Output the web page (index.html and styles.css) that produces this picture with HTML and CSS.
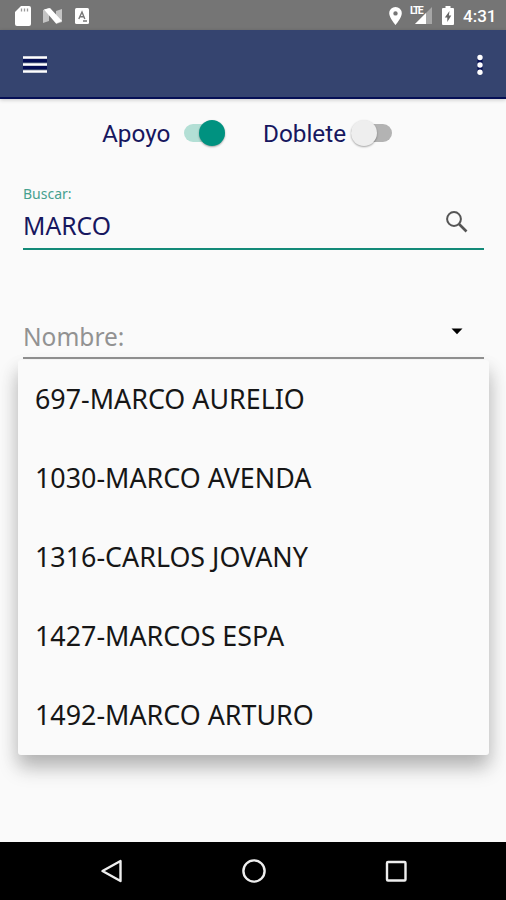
FILE: index.html
```html
<!DOCTYPE html>
<html lang="es">
<head>
<meta charset="utf-8">
<title>Apoyo</title>
<link rel="stylesheet" href="styles.css">
</head>
<body>
<div class="status">
  <svg class="sd" width="16" height="20" viewBox="0 0 16 20"><path fill="#fff" d="M6 0h8q2 0 2 2v16q0 2-2 2H2q-2 0-2-2V6z"/><path d="M6.500 2.500v3M9.500 2.500v3M12.500 2.500v3" stroke="#999" stroke-width="1.300"/></svg>
  <svg class="nougat" width="20" height="16" viewBox="0 0 20 16"><path fill="#c4c4c4" d="M0 2l6-2v13l-6 2zM13 3l6-2v13l-6 2z"/><path fill="#fff" d="M1 1.500L7 0l12 13-6 2.500z"/></svg>
  <svg class="abox" width="14" height="16" viewBox="0 0 14 16"><rect width="14" height="16" rx="1.500" fill="#fff"/><path d="M3.800 11L7 4l2.800 7M5 8.800h4M8 13h4" fill="none" stroke="#777" stroke-width="1.400"/></svg>
  <span class="spacer"></span>
  <svg class="pin" width="13" height="18" viewBox="0 0 13 18"><path fill="#fff" fill-rule="evenodd" d="M6.500 0A6.300 6.300 0 0 0 .2 6.300C.2 11 6.500 18 6.500 18s6.300-7 6.300-11.700A6.300 6.300 0 0 0 6.500 0zm0 4.200a2.200 2.200 0 1 1 0 4.400 2.200 2.200 0 0 1 0-4.400z"/></svg>
  <div class="signal"><svg width="22" height="18" viewBox="0 0 22 18"><path fill="#a6a6a6" d="M22 1v17H5z"/><path fill="#fff" d="M16 7v11H5z"/></svg><span class="lte">LTE</span></div>
  <svg class="battery" width="12" height="19" viewBox="0 0 12 19"><path fill="#fff" d="M3.500 0h5v2H11q1 0 1 1v15q0 1-1 1H1q-1 0-1-1V3q0-1 1-1h2.500z"/><path fill="#666" d="M7.500 5L2.800 11.500h2.500V16l4-6.500H6.900z"/></svg>
  <span class="clock">4:31</span>
</div>
<header class="bar">
  <svg width="24" height="18" viewBox="0 0 24 18"><path d="M0 4.500h24M0 11.500h24" stroke="#050f55" stroke-width="3"/><path d="M0 1.500h24M0 8.500h24M0 15.500h24" stroke="#fff" stroke-width="2.500"/></svg>
  <svg width="8" height="24" viewBox="0 0 8 24"><path d="M4 4v16" stroke="#050f55" stroke-width="5"/><g fill="#fff"><circle cx="4" cy="4.500" r="2.700"/><circle cx="4" cy="12" r="2.700"/><circle cx="4" cy="19.300" r="2.700"/></g></svg>
</header>
<main class="page">
  <div class="toggles">
    <span class="label apoyo">Apoyo</span><span class="switch on"><i class="knob"></i></span>
    <span class="label doblete">Doblete</span><span class="switch off"><i class="knob"></i></span>
  </div>
  <div class="field search">
    <div class="caption">Buscar:</div>
    <div class="row"><span class="value">MARCO</span>
      <svg width="22" height="22" viewBox="0 0 22 22" fill="none" stroke="#555"><circle cx="8" cy="8" r="6.900" stroke-width="2"/><path d="M13 13l7.500 7.500" stroke-width="2.600"/></svg>
    </div>
  </div>
  <div class="field name">
    <span class="hint">Nombre:</span>
    <svg width="12" height="7" viewBox="0 0 12 7"><path d="M.5.500h11L6 6.200z"/></svg>
  </div>
  <div class="menu">
    <div class="item"><span>697-MARCO AURELIO</span></div>
    <div class="item"><span>1030-MARCO AVENDA</span></div>
    <div class="item"><span>1316-CARLOS JOVANY</span></div>
    <div class="item"><span>1427-MARCOS ESPA</span></div>
    <div class="item"><span>1492-MARCO ARTURO</span></div>
  </div>
</main>
<nav class="nav">
  <svg width="24" height="24" viewBox="0 0 24 24"><path d="M20.500 2v20L2.500 12z"/></svg>
  <svg width="24" height="24" viewBox="0 0 24 24"><circle cx="12" cy="12" r="10.600"/></svg>
  <svg width="24" height="24" viewBox="0 0 24 24"><rect x="3" y="3" width="18.500" height="18.500" rx="1"/></svg>
</nav>
</body>
</html>
```
FILE: styles.css
```css
* { box-sizing: border-box; }
body {
  margin: 0;
  width: 506px;
  height: 900px;
  display: flex;
  flex-direction: column;
  overflow: hidden;
  background: #fafafa;
  font-family: "Noto Sans", sans-serif;
}
svg { display: block; flex: none; }
.status {
  height: 30px;
  flex: none;
  display: flex;
  align-items: center;
  padding: 1px 9px 0 15px;
  background: #757575;
}
.nougat { margin-left: 12px; }
.abox { margin-left: 12px; }
.spacer { flex: 1; }
.signal { position: relative; width: 22px; margin-left: 8px; }
.signal svg { margin-top: -1px; }
.lte {
  position: absolute;
  left: 0;
  top: -1px;
  font: 700 10.5px/9px Roboto, sans-serif;
  letter-spacing: -1.6px;
  color: #fff;
}
.battery { margin-left: 10px; }
.clock {
  width: 34px;
  margin-left: 9px;
  font: 500 17px/20px Roboto, sans-serif;
  color: #fff;
  white-space: nowrap;
}
.bar {
  height: 69px;
  flex: none;
  display: flex;
  align-items: center;
  justify-content: space-between;
  padding: 2px 22px 0 23px;
  background: #35446f;
  border-bottom: 2px solid #050f55;
  box-shadow: 0 1px 4px rgba(0, 0, 0, 0.2);
}
.page { flex: 1; }
.toggles {
  height: 68px;
  display: flex;
  align-items: center;
  padding-left: 102px;
}
.label {
  padding-top: 2px;
  font: 400 24.3px/28px Roboto, sans-serif;
  color: #17175f;
  white-space: nowrap;
}
.apoyo { width: 82px; }
.doblete { width: 88px; margin-left: 38px; }
.switch {
  width: 41px;
  height: 18px;
  display: flex;
  align-items: center;
  border-radius: 9px;
}
.knob {
  width: 26px;
  height: 26px;
  flex: none;
  border-radius: 50%;
  box-shadow: 0 1px 2px rgba(0, 0, 0, 0.35);
}
.on { justify-content: flex-end; background: #b3dfd5; }
.on .knob { background: #009280; }
.off { background: #b3b3b3; }
.off .knob { background: #eee; }
.field { margin: 0 22px 0 23px; }
.search {
  height: 83px;
  padding-top: 17px;
  border-bottom: 2px solid #138a78;
}
.caption {
  font-size: 14px;
  line-height: 20px;
  color: #46a18f;
}
.row {
  height: 43px;
  display: flex;
  align-items: center;
  justify-content: space-between;
  padding-right: 16px;
}
.row svg { margin-top: -8px; }
.value {
  font-size: 24.7px;
  line-height: 34px;
  color: #17175f;
}
.name {
  height: 109px;
  display: flex;
  align-items: flex-end;
  justify-content: space-between;
  padding: 0 21px 4px 0;
  border-bottom: 2px solid #929292;
}
.name svg { margin-bottom: 18px; }
.hint {
  font-size: 24.5px;
  line-height: 32px;
  color: #929292;
}
.menu {
  margin: 1px 17px 0 18px;
  height: 395px;
  border-radius: 3px;
  background: #fafafa;
  box-shadow: 0 13px 20px rgba(0, 0, 0, 0.22), 0 8px 18px rgba(0, 0, 0, 0.1);
}
.item {
  height: 78.8px;
  display: flex;
  align-items: center;
  padding: 0 0 1px 17px;
  font-size: 26.85px;
  color: #161616;
  white-space: nowrap;
}
.nav {
  height: 58px;
  flex: none;
  display: flex;
  justify-content: space-between;
  align-items: center;
  padding: 0 98px 0 100px;
  background: #000;
}
.nav svg { fill: none; stroke: #eee; stroke-width: 2.4; stroke-linejoin: round; }
```
